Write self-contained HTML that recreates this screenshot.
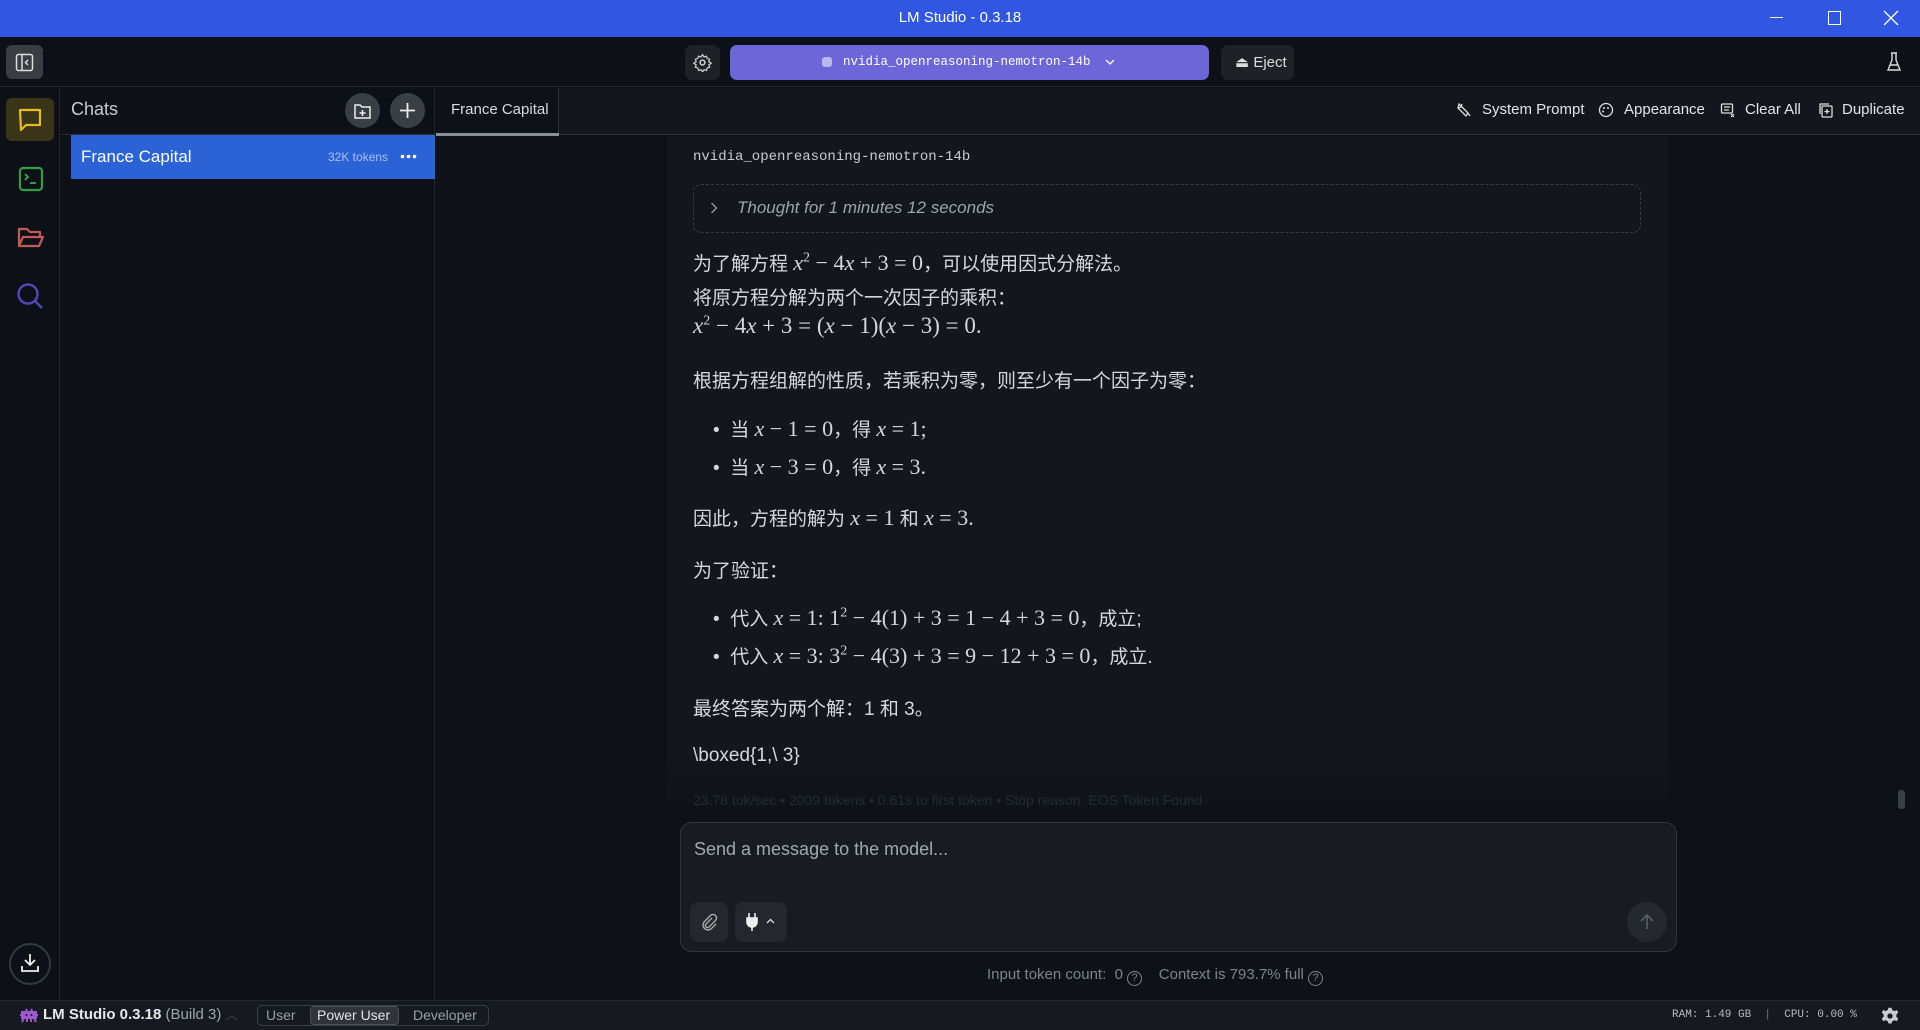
<!DOCTYPE html>
<html><head><meta charset="utf-8"><style>
*{margin:0;padding:0;box-sizing:border-box}
body{width:1920px;height:1030px;overflow:hidden;background:#0e1117;font-family:"Liberation Sans","Noto Sans CJK SC",sans-serif;color:#d6d9de;position:relative}
.a{position:absolute}
.m{font-family:"Liberation Serif","Noto Serif CJK SC",serif;font-size:22px}
.i{font-style:italic}
.p{position:absolute;left:693px;font-size:19px;color:#d4d7dc;white-space:nowrap}
.mono{font-family:"Liberation Mono","DejaVu Sans Mono",monospace}
</style></head><body>
<div class="a" style="left:0;top:0;width:1920px;height:37px;background:#3157e2"></div>
<div class="a" style="left:0;top:9px;width:1920px;text-align:center;color:#fff;font-size:15px">LM Studio - 0.3.18</div>
<div class="a" style="left:1770px;top:17px;width:13px;height:1px;background:#fff"></div>
<div class="a" style="left:1828px;top:11px;width:13px;height:14px;border:1px solid #fff"></div>
<svg class="a" style="left:1883px;top:10px" width="16" height="16"><path d="M1 1L15 15M15 1L1 15" stroke="#fff" stroke-width="1.3"/></svg>
<div class="a" style="left:0;top:37px;width:1920px;height:50px;background:#0d1016;border-bottom:1px solid #252a31"></div>
<div class="a" style="left:6px;top:45px;width:37px;height:34px;border-radius:6px;background:#3a3d42"></div>
<svg class="a" style="left:15px;top:53px" width="19" height="19"><rect x="1.5" y="1.5" width="16" height="16" rx="2" fill="none" stroke="#ddd" stroke-width="1.5"/><path d="M7 2v15M13 7l-2.5 2.5L13 12" stroke="#ddd" stroke-width="1.5" fill="none"/></svg>
<div class="a" style="left:685px;top:45px;width:35px;height:35px;border-radius:7px;background:#1e2227"></div>
<svg class="a" style="left:693px;top:53px" width="19" height="19" viewBox="0 0 24 24"><circle cx="12" cy="12" r="3" fill="none" stroke="#ccc" stroke-width="2"/><path d="M12 2l2 3 3-1 1 3 3 1-1 3 3 2-3 2 1 3-3 1-1 3-3-1-2 3-2-3-3 1-1-3-3-1 1-3-3-2 3-2-1-3 3-1 1-3 3 1z" fill="none" stroke="#ccc" stroke-width="1.6"/></svg>
<div class="a" style="left:730px;top:45px;width:479px;height:35px;border-radius:7px;background:#6d66d8"></div>
<div class="a" style="left:822px;top:57px;width:10px;height:10px;border-radius:3px;background:#b9b6f0"></div>
<div class="a mono" style="left:843px;top:55px;font-size:12.5px;color:#fff">nvidia_openreasoning-nemotron-14b</div>
<svg class="a" style="left:1105px;top:58px" width="10" height="8"><path d="M1 2l4 4 4-4" stroke="#fff" fill="none" stroke-width="1.3"/></svg>
<div class="a" style="left:1221px;top:45px;width:73px;height:35px;border-radius:7px;background:#1e2227"></div>
<div class="a" style="left:1235px;top:53px;font-size:15px;color:#ddd">⏏ Eject</div>
<svg class="a" style="left:1886px;top:51px" width="16" height="22"><path d="M5 2h6M6 2v7L2 19h12L10 9V2M4 14h8" stroke="#ddd" fill="none" stroke-width="1.4"/></svg>
<div class="a" style="left:0;top:88px;width:60px;height:912px;background:#0d1016;border-right:1px solid #22262d"></div>
<div class="a" style="left:6px;top:98px;width:48px;height:43px;border-radius:6px;background:#3a3418"></div>
<svg class="a" style="left:17px;top:107px" width="26" height="26"><path d="M3 3h20v15H9l-5 5z" fill="none" stroke="#e5bd1e" stroke-width="2.2" stroke-linejoin="round"/></svg>
<svg class="a" style="left:18px;top:166px" width="26" height="26"><rect x="2" y="2" width="22" height="22" rx="3" fill="none" stroke="#2f9e44" stroke-width="2.2"/><path d="M7 8l3 3-3 3M12 17h6" stroke="#2f9e44" stroke-width="2" fill="none"/></svg>
<svg class="a" style="left:17px;top:225px" width="28" height="24"><path d="M2 21V4h8l3 3h10v5M2 21l4-9h20l-4 9z" fill="none" stroke="#c25a5a" stroke-width="2.2" stroke-linejoin="round"/></svg>
<svg class="a" style="left:16px;top:282px" width="30" height="30"><circle cx="12" cy="12" r="9.5" fill="none" stroke="#5048b8" stroke-width="2.4"/><path d="M19 19l7 7" stroke="#5048b8" stroke-width="2.4"/></svg>
<div class="a" style="left:9px;top:943px;width:42px;height:42px;border-radius:50%;border:2px solid #33383f"></div>
<svg class="a" style="left:19px;top:952px" width="22" height="22"><path d="M11 2v11M6 8l5 5 5-5M3 14v5h16v-5" stroke="#eee" stroke-width="1.8" fill="none"/></svg>
<div class="a" style="left:61px;top:88px;width:374px;height:912px;background:#0d1016;border-right:1px solid #22262d"></div>
<div class="a" style="left:61px;top:134px;width:374px;height:1px;background:#2a2f36"></div>
<div class="a" style="left:71px;top:99px;font-size:18px;color:#c8ccd2">Chats</div>
<div class="a" style="left:345px;top:93px;width:35px;height:35px;border-radius:50%;background:#3a3f46"></div>
<svg class="a" style="left:353px;top:101px" width="19" height="19"><path d="M2 4h5l2 2h8v11H2z" fill="none" stroke="#eee" stroke-width="1.5"/><path d="M9.5 9v6M6.5 12h6" stroke="#eee" stroke-width="1.5"/></svg>
<div class="a" style="left:390px;top:93px;width:35px;height:35px;border-radius:50%;background:#3a3f46"></div>
<svg class="a" style="left:398px;top:101px" width="19" height="19"><path d="M9.5 2v15M2 9.5h15" stroke="#eee" stroke-width="1.8"/></svg>
<div class="a" style="left:71px;top:135px;width:364px;height:44px;background:#2b63d6"></div>
<div class="a" style="left:81px;top:147px;font-size:17px;color:#fff">France Capital</div>
<div class="a" style="left:328px;top:150px;font-size:12px;color:#a8bff0">32K tokens</div>
<svg class="a" style="left:400px;top:154px" width="17" height="5"><circle cx="2.5" cy="2.5" r="1.8" fill="#fff"/><circle cx="8.5" cy="2.5" r="1.8" fill="#fff"/><circle cx="14.5" cy="2.5" r="1.8" fill="#fff"/></svg>
<div class="a" style="left:436px;top:88px;width:1484px;height:47px;background:#13171d;border-bottom:1px solid #2a2f36"></div>
<div class="a" style="left:436px;top:88px;width:123px;height:47px;background:#0e1117;border-right:1px solid #2a2f36"></div>
<div class="a" style="left:436px;top:133px;width:123px;height:3px;background:#8b9096"></div>
<div class="a" style="left:451px;top:101px;font-size:15px;color:#d8dbe0">France Capital</div>
<svg class="a" style="left:1456px;top:102px" width="16" height="16"><path d="M3 2l9 9-2 3-8-8zM12 11l2 3M2 6l3-1 1-3" stroke="#ddd" fill="none" stroke-width="1.3"/></svg>
<div class="a" style="left:1482px;top:101px;font-size:15px;color:#e2e5e9">System Prompt</div>
<svg class="a" style="left:1598px;top:102px" width="16" height="16"><circle cx="8" cy="8" r="6.5" fill="none" stroke="#ddd" stroke-width="1.3"/><circle cx="6" cy="6" r="1" fill="#ddd"/><circle cx="10" cy="6" r="1" fill="#ddd"/><circle cx="5" cy="9.5" r="1" fill="#ddd"/></svg>
<div class="a" style="left:1624px;top:101px;font-size:15px;color:#e2e5e9">Appearance</div>
<svg class="a" style="left:1720px;top:102px" width="16" height="16"><rect x="1.5" y="2" width="11" height="9" rx="1" fill="none" stroke="#ddd" stroke-width="1.3"/><path d="M4 5h6M4 8h5M11 12l3 3M14 12l-3 3" stroke="#ddd" stroke-width="1.2"/></svg>
<div class="a" style="left:1745px;top:101px;font-size:15px;color:#e2e5e9">Clear All</div>
<svg class="a" style="left:1818px;top:102px" width="16" height="16"><rect x="4" y="4" width="10" height="11" rx="1" fill="none" stroke="#ddd" stroke-width="1.3"/><path d="M2 12V2h9M9 7v5M6.5 9.5h5" stroke="#ddd" stroke-width="1.3" fill="none"/></svg>
<div class="a" style="left:1842px;top:101px;font-size:15px;color:#e2e5e9">Duplicate</div>
<div class="a" style="left:436px;top:136px;width:1484px;height:864px;background:#0e1117"></div>
<div class="a" style="left:667px;top:136px;width:1001px;height:670px;background:#13171d"></div>
<div class="a" style="left:667px;top:760px;width:1001px;height:60px;background:linear-gradient(#13171d00,#0e1117)"></div>
<div class="a mono" style="left:693px;top:149px;font-size:14px;color:#c8ccd2">nvidia_openreasoning-nemotron-14b</div>
<div class="a" style="left:693px;top:184px;width:948px;height:49px;border:1px dashed #363b44;border-radius:8px"></div>
<svg class="a" style="left:710px;top:202px" width="8" height="12"><path d="M1.5 1l5 5-5 5" stroke="#9aa0a8" fill="none" stroke-width="1.3"/></svg>
<div class="a i" style="left:737px;top:198px;font-size:17px;color:#9ea3aa">Thought for 1 minutes 12 seconds</div>
<div class="p" style="top:249px">为了解方程 <span class="m"><i>x</i><sup style="font-size:14px">2</sup> − 4<i>x</i> + 3 = 0</span>，可以使用因式分解法。</div>
<div class="p" style="top:283px">将原方程分解为两个一次因子的乘积：</div>
<div class="p m" style="top:313px;font-size:23px"><i>x</i><sup style="font-size:14px">2</sup> − 4<i>x</i> + 3 = (<i>x</i> − 1)(<i>x</i> − 3) = 0.</div>
<div class="p" style="top:366px">根据方程组解的性质，若乘积为零，则至少有一个因子为零：</div>
<div class="p" style="top:415px;left:713px">•&nbsp; 当 <span class="m"><i>x</i> − 1 = 0</span>，得 <span class="m"><i>x</i> = 1;</span></div>
<div class="p" style="top:453px;left:713px">•&nbsp; 当 <span class="m"><i>x</i> − 3 = 0</span>，得 <span class="m"><i>x</i> = 3.</span></div>
<div class="p" style="top:504px">因此，方程的解为 <span class="m"><i>x</i> = 1</span> 和 <span class="m"><i>x</i> = 3.</span></div>
<div class="p" style="top:556px">为了验证：</div>
<div class="p" style="top:604px;left:713px">•&nbsp; 代入 <span class="m"><i>x</i> = 1: 1<sup style="font-size:14px">2</sup> − 4(1) + 3 = 1 − 4 + 3 = 0</span>，成立;</div>
<div class="p" style="top:642px;left:713px">•&nbsp; 代入 <span class="m"><i>x</i> = 3: 3<sup style="font-size:14px">2</sup> − 4(3) + 3 = 9 − 12 + 3 = 0</span>，成立.</div>
<div class="p" style="top:694px">最终答案为两个解：1 和 3。</div>
<div class="p" style="top:745px">\boxed{1,\ 3}</div>
<div class="a" style="left:693px;top:792px;font-size:14px;color:#262b32">23.78 tok/sec • 2009 tokens • 0.61s to first token • Stop reason: EOS Token Found</div>
<div class="a" style="left:1898px;top:790px;width:7px;height:19px;border-radius:3px;background:#3b4047"></div>
<div class="a" style="left:680px;top:822px;width:997px;height:130px;border:1px solid #30353d;border-radius:12px;background:#181c22"></div>
<div class="a" style="left:694px;top:839px;font-size:18px;color:#a3a8ae">Send a message to the model...</div>
<div class="a" style="left:690px;top:902px;width:38px;height:40px;border-radius:8px;background:#24282e"></div>
<svg class="a" style="left:700px;top:913px" width="18" height="18"><path d="M12 5l-6 6a2 2 0 003 3l6.5-6.5a3.5 3.5 0 00-5-5L4 9a5 5 0 007 7l5-5" stroke="#aaa" fill="none" stroke-width="1.4"/></svg>
<div class="a" style="left:735px;top:902px;width:52px;height:40px;border-radius:8px;background:#24282e"></div>
<svg class="a" style="left:745px;top:912px" width="14" height="20"><path d="M4 1v5M10 1v5M2 6h10v4a5 5 0 01-10 0zM7 14v5" stroke="#eee" stroke-width="1.6" fill="#eee"/></svg>
<svg class="a" style="left:766px;top:918px" width="9" height="6"><path d="M1 5l3.5-3.5L8 5" stroke="#ddd" fill="none" stroke-width="1.3"/></svg>
<div class="a" style="left:1627px;top:902px;width:40px;height:40px;border-radius:50%;background:#25292f"></div>
<svg class="a" style="left:1639px;top:913px" width="16" height="18"><path d="M8 16V2M2 8l6-6 6 6" stroke="#5d636b" fill="none" stroke-width="1.5"/></svg>
<div class="a" style="left:987px;top:966px;font-size:15px;color:#7e848c">Input token count:&nbsp; 0 <span style="display:inline-block;width:15px;height:15px;border:1px solid #7e848c;border-radius:50%;font-size:11px;text-align:center;line-height:13px;vertical-align:-2px">?</span> &nbsp;&nbsp; Context is 793.7% full <span style="display:inline-block;width:15px;height:15px;border:1px solid #7e848c;border-radius:50%;font-size:11px;text-align:center;line-height:13px;vertical-align:-2px">?</span></div>
<div class="a" style="left:0;top:1000px;width:1920px;height:30px;background:#161a20;border-top:1px solid #22262d"></div>
<svg class="a" style="left:19px;top:1007px" width="20" height="16"><path d="M3 5h14v6H3zM1 8h2M17 8h2M5 11l-2 4M15 11l2 4M7 2l1 3M13 2l-1 3M8 11v4M12 11v4" stroke="#9b59d0" stroke-width="2" fill="#9b59d0"/><circle cx="7.5" cy="8" r="1" fill="#161a20"/><circle cx="12.5" cy="8" r="1" fill="#161a20"/></svg>
<div class="a" style="left:43px;top:1006px;font-size:15px;color:#e6e8eb"><b>LM Studio 0.3.18</b> <span style="color:#a0a5ac">(Build 3)</span> <span style="color:#454a52;font-size:12px">︿</span></div>
<div class="a" style="left:257px;top:1005px;width:232px;height:21px;border:1px solid #3a3f46;border-radius:5px"></div>
<div class="a" style="left:310px;top:1006px;width:89px;height:19px;border:1px solid #4a4f56;border-radius:4px;background:#30343a"></div>
<div class="a" style="left:266px;top:1007px;font-size:14px;color:#9aa0a8">User</div>
<div class="a" style="left:317px;top:1007px;font-size:14px;color:#dfe2e6">Power User</div>
<div class="a" style="left:413px;top:1007px;font-size:14px;color:#9aa0a8">Developer</div>
<div class="a mono" style="left:1672px;top:1009px;font-size:11px;color:#b6bac0">RAM: 1.49 GB &nbsp;<span style="color:#777">|</span>&nbsp; CPU: 0.00 %</div>
<svg class="a" style="left:1881px;top:1007px" width="18" height="18" viewBox="0 0 24 24"><path d="M10 1h4l1 3 3 1.5 3-1.5 2 3.5-2.5 2.3v3.4l2.5 2.3-2 3.5-3-1.5-3 1.5-1 3h-4l-1-3-3-1.5-3 1.5-2-3.5 2.5-2.3v-3.4L1 7.5 3 4l3 1.5L9 4z" fill="#c8ccd2"/><circle cx="12" cy="12" r="3.5" fill="#161a20"/></svg>
</body></html>
